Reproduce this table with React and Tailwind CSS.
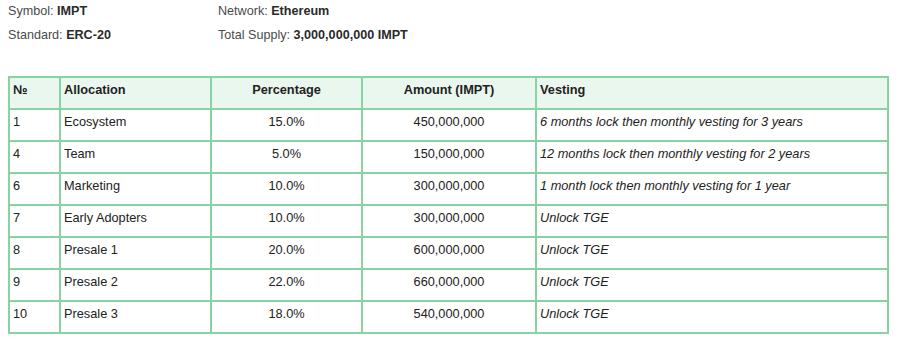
const rows = [
  ["1", "Ecosystem", "15.0%", "450,000,000", "6 months lock then monthly vesting for 3 years"],
  ["4", "Team", "5.0%", "150,000,000", "12 months lock then monthly vesting for 2 years"],
  ["6", "Marketing", "10.0%", "300,000,000", "1 month lock then monthly vesting for 1 year"],
  ["7", "Early Adopters", "10.0%", "300,000,000", "Unlock TGE"],
  ["8", "Presale 1", "20.0%", "600,000,000", "Unlock TGE"],
  ["9", "Presale 2", "22.0%", "660,000,000", "Unlock TGE"],
  ["10", "Presale 3", "18.0%", "540,000,000", "Unlock TGE"],
];

function Info({ label, value }) {
  return (
    <div className="text-[12.6px] leading-[16px] text-[#4a4a4a]">
      {label} <span className="font-bold text-[#2a2a2a]">{value}</span>
    </div>
  );
}

export default function App() {
  const cell = "border-2 border-[#88d3a2] h-[32px] align-top pt-[4px] px-[3px]";
  return (
    <div className="w-[900px] h-[342px] bg-white font-['Liberation_Sans',Arial,sans-serif] text-[#222]">
      <div className="grid grid-cols-[210px_1fr] gap-y-[8px] pl-[8px] pt-[3px]">
        <Info label="Symbol:" value="IMPT" />
        <Info label="Network:" value="Ethereum" />
        <Info label="Standard:" value="ERC-20" />
        <Info label="Total Supply:" value="3,000,000,000 IMPT" />
      </div>
      <table className="ml-[8px] mt-[33px] w-[881px] table-fixed border-collapse text-[12.75px] leading-[16px]">
        <colgroup>
          <col className="w-[51px]" />
          <col className="w-[151px]" />
          <col className="w-[151px]" />
          <col className="w-[174px]" />
          <col />
        </colgroup>
        <thead>
          <tr className="bg-[#e9f7ee] font-bold">
            <th className={`${cell} text-left`}>№</th>
            <th className={`${cell} text-left`}>Allocation</th>
            <th className={`${cell} text-center`}>Percentage</th>
            <th className={`${cell} text-center`}>Amount (IMPT)</th>
            <th className={`${cell} text-left`}>Vesting</th>
          </tr>
        </thead>
        <tbody>
          {rows.map((r) => (
            <tr key={r[0]}>
              <td className={`${cell} text-left`}>{r[0]}</td>
              <td className={`${cell} text-left`}>{r[1]}</td>
              <td className={`${cell} text-center`}>{r[2]}</td>
              <td className={`${cell} text-center`}>{r[3]}</td>
              <td className={`${cell} text-left italic`}>{r[4]}</td>
            </tr>
          ))}
        </tbody>
      </table>
    </div>
  );
}
